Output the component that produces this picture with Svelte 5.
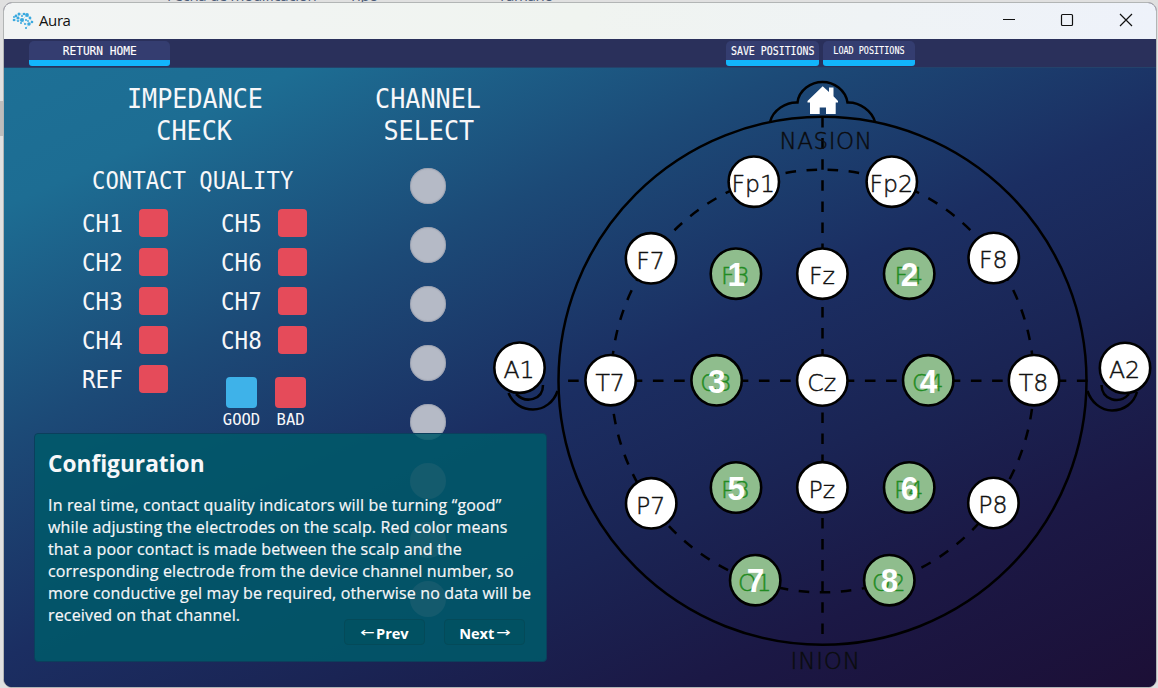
<script>
  const nodes = [
    ['A1', 519.5, 367.7], ['A2', 1125, 367.9], ['Fp1', 753.8, 181.7], ['Fp2', 891.8, 181.7],
    ['F7', 651, 258.3], ['F8', 993.7, 258], ['Fz', 822.4, 273.7], ['T7', 610.6, 380.2],
    ['Cz', 822.3, 380.5], ['T8', 1034, 380.2], ['P7', 651.2, 503.3], ['P8', 993.4, 503],
    ['Pz', 822.4, 487.3]
  ];
  const picked = [
    ['F3', 735.9, 273.7, 1], ['F4', 909.2, 273.7, 2], ['C3', 716.6, 380.3, 3], ['C4', 928.2, 380.3, 4],
    ['P3', 736, 487.5, 5], ['P4', 909.2, 487.5, 6], ['O1', 755.2, 580.2, 7], ['O2', 889.3, 580.2, 8]
  ];
  const dots = [
    [2, 8, 1.3], [4, 4, 1.4], [7, 2, 1.5], [10, 4, 1], [12, 2, 1.3], [15, 3, 1.9], [18, 6, 1.4], [20, 10, 1.3],
    [6, 6, 1.5], [10, 8, 2], [14, 8, 1], [2, 5, 1], [6, 9, 1], [17, 12, 1.7], [13, 12, 1], [14, 16, 1.1], [9, 11, 1], [16, 9, 0.9]
  ];
</script>

<div class="desktop">
  <div class="behind"><span>Fecha de modificación</span><span>Tipo</span><span>Tamaño</span></div>
  <div class="stub"></div>
  <div class="window">
    <header class="title">
      <svg class="logo" width="22" height="18" viewBox="0 0 22 18">
        <path d="M2 8L6 6L7 2L12 2L15 3L18 6L20 10L17 12L14 16M6 6L10 8L15 3M10 8L13 12L17 12M2 8L6 9L10 8" />
        {#each dots as [x, y, r]}<circle cx={x} cy={y} {r} />{/each}
      </svg>
      <span class="name">Aura</span>
      <svg class="controls" width="140" height="36" viewBox="0 0 140 36">
        <path d="M7 16.5H19" /><rect x="65.5" y="11.5" width="11" height="11" rx="1" /><path d="M124 11L136 23M136 11L124 23" />
      </svg>
    </header>
    <nav>
      <button class="home"><span>RETURN HOME</span></button>
      <button class="save"><span>SAVE POSITIONS</span></button>
      <button class="load"><span>LOAD POSITIONS</span></button>
    </nav>
    <main>
      <section class="impedance">
        <h1><span>IMPEDANCE</span><span>CHECK</span></h1>
        <h2><span>CONTACT QUALITY</span></h2>
        <div class="quality">
          <div class="col">
            {#each ['CH1', 'CH2', 'CH3', 'CH4', 'REF'] as c}<div class="ch"><b><span>{c}</span></b><i></i></div>{/each}
          </div>
          <div class="col">
            {#each ['CH5', 'CH6', 'CH7', 'CH8'] as c}<div class="ch"><b><span>{c}</span></b><i></i></div>{/each}
            <div class="legend">
              <div><i class="good"></i><span>GOOD</span></div>
              <div><i></i><span>BAD</span></div>
            </div>
          </div>
        </div>
      </section>
      <section class="channels">
        <h1><span>CHANNEL</span><span>SELECT</span></h1>
        <div class="dots">{#each Array(8) as _}<i></i>{/each}</div>
      </section>
      <svg class="head" width="672" height="618" viewBox="484 68 672 618">
        <g class="line">
          <circle cx="822.5" cy="380.8" r="264" />
          <path d="M770 122C773 110 786 102 797.5 102.5C799 90 811 82 822.5 82C834 82 845.500 90 847.500 102.5C860 102 872 111 875 122" />
          <path d="M508.500 393C513 404 523 409.500 533 409.500C544 409.500 554 402 557.500 391M516 394C526 404 543 400 543 385" />
          <path d="M1087.500 391C1091 402 1101 410.500 1112 410.500C1124 410.500 1134 403 1137 392M1101.500 385C1102 400 1119 405 1129 394" />
          <path class="dash" d="M822.500 117V645" /><path class="dash h" d="M1087.500 380.800H557.500" />
          <circle class="ring" cx="822.5" cy="381" r="211.3" />
        </g>
        <path class="house" d="M822.700 86.300L829 92V87.500H833.500V96.300L838 101V102.500H835.700V114H826V107.500H819.700V114H810V102.500H807.500V101Z" />
        <text class="mark" x="779.5" y="149" textLength="92.5">NASION</text>
        <text class="mark" x="790.5" y="669" textLength="69.5">INION</text>
        {#each nodes as [label, x, y]}
          <circle class="node" cx={x} cy={y} r="25.2" /><text x={x - 0.5} y={y + 10.4} text-anchor="middle">{label}</text>
        {/each}
        {#each picked as [label, x, y, n]}
          <circle class="node on" cx={x} cy={y} r="25.2" /><text class="under" x={x - 0.5} y={y + 10.4} text-anchor="middle">{label}</text>
          <text class="num" x={x + 0.3} y={y + 12.2} text-anchor="middle" textLength="17.6" lengthAdjust="spacingAndGlyphs">{n}</text>
        {/each}
      </svg>
      <aside>
        <h3>Configuration</h3>
        <p>In real time, contact quality indicators will be turning “good”<br />while adjusting the electrodes on the scalp. Red color means<br />that a poor contact is made between the scalp and the<br />corresponding electrode from the device channel number, so<br />more conductive gel may be required, otherwise no data will be<br />received on that channel.</p>
        <div class="steps"><button><em>←</em> Prev</button><button>Next <em>→</em></button></div>
      </aside>
    </main>
  </div>
</div>

<style>
  :global(body) { margin: 0; }
  * { box-sizing: border-box; }
  .desktop { position: relative; width: 1158px; height: 688px; overflow: hidden; background: #e0e0e0; padding: 2px 1px 1px 3px; }
  .behind { position: absolute; top: -13px; left: 167px; height: 16px; width: 700px; display: grid; grid-template-columns: 182px 149px 200px; font: 15px/17px "Open Sans", sans-serif; letter-spacing: -.3px; color: #4b5b78; }
  .stub { position: absolute; left: 0; top: 101px; width: 4px; height: 35px; background: #bdbdbd; }
  .window { position: relative; width: 1154px; height: 686px; border: 1px solid #b2b5b5; border-radius: 9px; overflow: hidden; display: flex; flex-direction: column; background: #1c1038; }
  .title { height: 36px; flex: none; display: flex; align-items: center; padding-left: 8px; background: linear-gradient(100deg, #f2f4f4, #f0f4f0 50%, #eef2fa); }
  .logo { fill: #3aa9df; } .logo path { fill: none; stroke: #8bcdeb; stroke-width: .5; }
  .name { margin: -2px 0 0 5px; font: 15px "Open Sans", sans-serif; color: #111; letter-spacing: -.4px; }
  .controls { margin-left: auto; margin-right: 20px; fill: none; stroke: #111; stroke-width: 1.2; }
  nav { height: 29px; flex: none; display: flex; background: #2a305b; padding: 2px 0 0 25px; border-bottom: 1px solid #24426b; }
  button { border: 0; padding: 0; color: #fff; }
  nav button { height: 25px; border-radius: 5px 5px 3px 3px; background: #343d70; border-bottom: 6px solid #12b5fc; font: 12.3px/17px "DejaVu Sans Mono", monospace; display: flex; justify-content: center; }
  nav span { display: block; flex: none; position: relative; top: 1.5px; transform: scaleX(.91); -webkit-text-stroke: .15px #fff; }
  .home { width: 141px; } .save { width: 93px; margin-left: 556px; } .load { width: 92px; margin-left: 4px; }
  nav .save { font-size: 11.8px; } nav .save span { transform: scaleX(.84); }
  nav .load { font-size: 10.2px; } nav .load span { transform: scaleX(.83); top: 1px; }
  main { position: relative; flex: 1; min-height: 0; display: flex; background: linear-gradient(155deg, #1d7096 0%, #1d6d93 12%, #1c4a77 32%, #1b2e62 51%, #1a2454 66%, #1b1845 81%, #1c0f36 100%); color: #f7f7f9; font-family: "DejaVu Sans Mono", monospace; }
  .impedance { width: 380px; }
  h1, h2 { margin: 0; font-weight: 400; display: flex; flex-direction: column; align-items: center; }
  h1 { font-size: 27.3px; line-height: 32px; padding-top: 15px; } h1 span { transform: scaleX(.92); }
  h2 { font-size: 24.5px; line-height: 30px; padding-top: 19px; } h2 span { transform: scaleX(.91); white-space: nowrap; }
  .impedance h1 { width: 381px; } .impedance h2 { width: 378px; }
  .quality { display: flex; padding: 7px 0 0 77px; gap: 52px; }
  .col { width: 87px; }
  .ch { display: flex; justify-content: space-between; align-items: center; height: 39px; }
  .col:first-child .ch:last-child { height: 40px; }
  b { font-weight: 400; font-size: 24.5px; width: 44px; padding: 1px 0 0 1px; } b span { display: block; transform: scaleX(.92); transform-origin: left; }
  i { display: block; width: 29px; height: 28px; border-radius: 4px; background: #e54b5a; }
  .legend { display: flex; gap: 8px; margin: 18px 0 0 1px; }
  .legend div { width: 41px; flex: none; display: flex; flex-direction: column; align-items: center; }
  .legend i { width: 31px; height: 31px; } .legend .good { background: #3eb2e9; }
  .legend span { font-size: 16.2px; line-height: 20px; margin: 2px 0 0 0; transform: scaleX(.96); }
  .channels { width: 100px; display: flex; flex-direction: column; align-items: center; }
  .channels h1 { transform: translateX(-5.5px); }
  .dots { display: flex; flex-direction: column; gap: 23px; padding-top: 21px; margin-left: -12px; }
  .dots i { width: 36px; height: 36px; border-radius: 50%; background: #b5bac6; box-shadow: inset 0 0 1px 1px #888e9f88; }
  .head { flex: none; display: block; }
  .line { fill: none; stroke: #000; stroke-width: 2.5; }
  .dash { stroke-dasharray: 10.55; } .h { stroke-dasharray: 10.6; }
  .ring { stroke-dasharray: 10.57; stroke-dashoffset: -6.86; }
  .house { fill: #fff; }
  text { font: 200 23.6px "DejaVu Sans", sans-serif; fill: #111; stroke: #111; stroke-width: .45; }
  .mark { font-size: 23px; fill: #05080f; }
  .node { fill: #fff; stroke: #000; stroke-width: 2.6; } .on { fill: #8fbd8d; }
  .under { fill: #228b22; stroke: #228b22; }
  .num { font: 700 34px "Liberation Sans", sans-serif; fill: #fff; stroke: none; }
  aside { position: absolute; left: 30px; top: 365px; width: 513px; height: 229px; border: 1px solid #0b3f5c; border-radius: 4px; background: rgba(0, 90, 106, .87); padding: 13px; font-family: "Open Sans", sans-serif; }
  .dots i:nth-child(n+6) { background: #b8708f; box-shadow: none; opacity: .8; }
  h3 { margin: 0; font-size: 22.7px; line-height: 34px; }
  p { margin: 13px 0 0; font-size: 16px; line-height: 22px; white-space: nowrap; letter-spacing: .16px; -webkit-text-stroke: .2px #f7f7f9; }
  .steps { display: flex; justify-content: flex-end; gap: 19px; margin: -7px 8px 0 0; }
  .steps button { width: 81px; height: 26px; border: 1px solid #044a59; border-radius: 4px; background: #015162; font: 700 14.6px/24px "Open Sans", sans-serif; display: flex; align-items: center; justify-content: center; gap: 3px; letter-spacing: -.1px; padding-top: 1px; }
  em { font: 400 15px/15px "DejaVu Sans", sans-serif; transform: scale(1.15, .9); }
</style>
